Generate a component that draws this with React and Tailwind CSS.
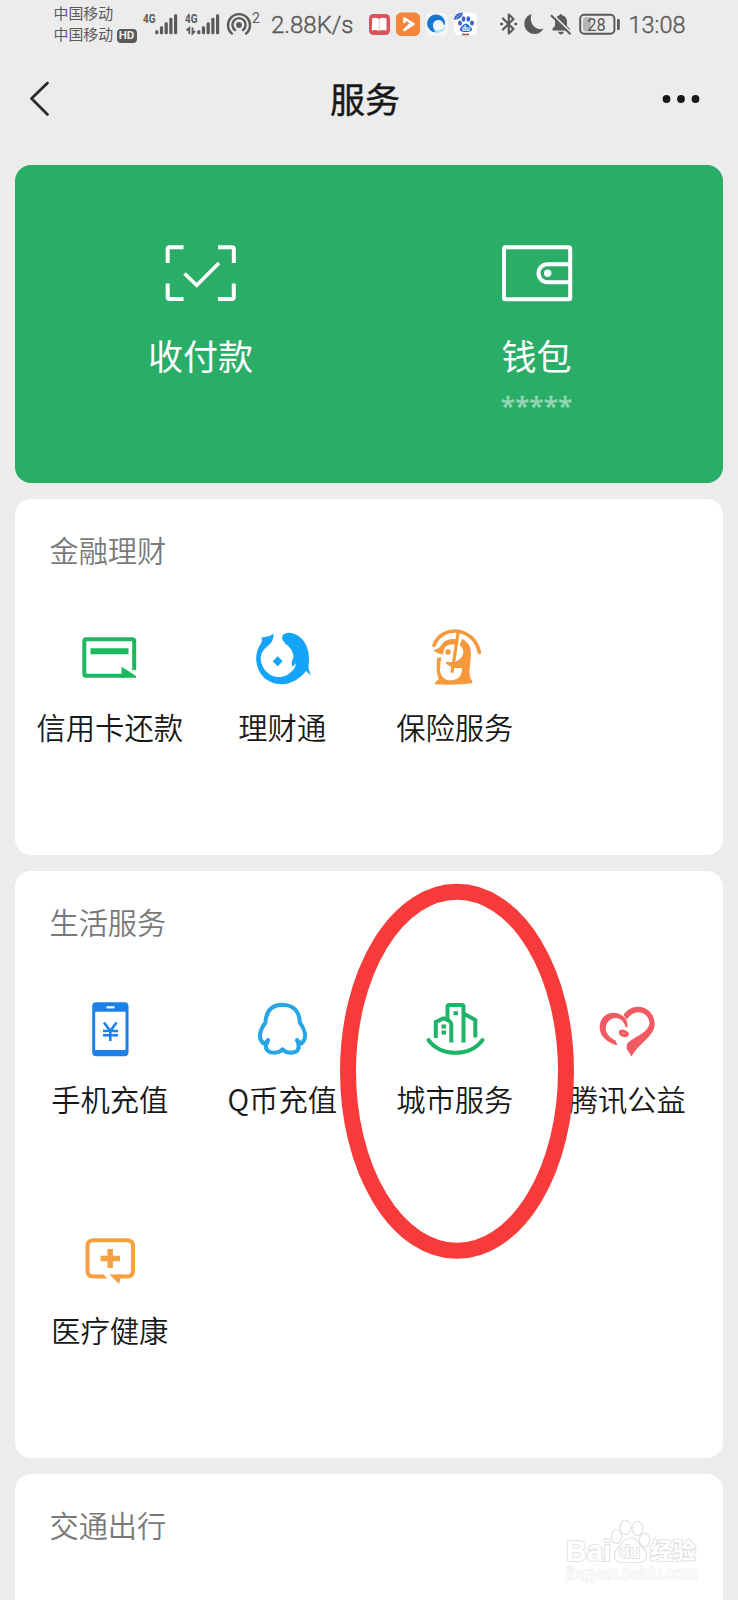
import React from "react";

function SignalBars({ x }) {
  return (
    <g fill="#5a5a5a">
      {[0, 1, 2, 3, 4].map((i) => {
        const h = [4, 8, 12, 16.5, 20][i];
        return <rect key={i} x={x + i * 4.7} y={34.3 - h} width="3.2" height={h} rx="1.4" />;
      })}
    </g>
  );
}

function StatusBar() {
  return (
    <div className="flex h-[50px] items-start pl-[53.5px] text-[#5a5a5a]">
      <div className="w-[61px] pt-[1.5px] text-[14.9px] leading-[21.5px] whitespace-nowrap">
        <div>中国移动</div>
        <div>中国移动</div>
      </div>
      <div className="mt-[28.5px] ml-[2px] flex h-[14px] w-[20px] items-center justify-center rounded-[4px] bg-[#5a5a5a] font-['Roboto',sans-serif] text-[11.5px] leading-none font-bold text-[#ececec]">
        HD
      </div>
      <svg className="ml-[5.5px] h-[50px] w-[37px] shrink-0" viewBox="142 0 37 50">
        <text x="143" y="23" fontSize="12.5" fontWeight="700" fill="#5a5a5a" fontFamily="Roboto, sans-serif" textLength="12.5" lengthAdjust="spacingAndGlyphs">4G</text>
        <SignalBars x={155.2} />
      </svg>
      <svg className="ml-[5px] h-[50px] w-[37px] shrink-0" viewBox="184 0 37 50">
        <text x="185" y="23" fontSize="12.5" fontWeight="700" fill="#5a5a5a" fontFamily="Roboto, sans-serif" textLength="12.5" lengthAdjust="spacingAndGlyphs">4G</text>
        <path d="M189.300 34V28L186.500 30.500M192.500 27.500V33.500L195 31" fill="none" stroke="#5a5a5a" strokeWidth="1.800" />
        <SignalBars x={197.2} />
      </svg>
      <svg className="ml-[4px] h-[50px] w-[28px] shrink-0" viewBox="225 0 28 50" fill="none" stroke="#5a5a5a" strokeWidth="2.4" strokeLinecap="round">
        <circle cx="239" cy="25" r="2.9" fill="#5a5a5a" stroke="none" />
        <path d="M232 33.6A11 11 0 1 1 246 33.6" />
        <path d="M235 30A6.6 6.6 0 1 1 243 30" />
      </svg>
      <div className="mt-[11px] -ml-px w-[18px] font-['Roboto',sans-serif] text-[14px] leading-[14px]">2</div>
      <div className="mt-[10.5px] ml-px w-[97px] font-['Roboto',sans-serif] text-[24px] leading-[29px] font-light whitespace-nowrap [-webkit-text-stroke:0.4px_#5a5a5a]">
        2.88K/s
      </div>
      <svg className="h-[50px] w-[112px] shrink-0" viewBox="368 0 112 50">
        <rect x="369" y="14" width="21" height="21" rx="4.5" fill="#d9525c" />
        <path d="M372 18.5q4-1.500 7 .5q3.500-2 7.500-.5V30.500q-4-1.200-7.500.3q-3-1.500-7-.3Z" fill="#fff" />
        <path d="M379.300 19.500V30" stroke="#eab0b4" strokeWidth=".8" />
        <rect x="396" y="12.500" width="24" height="23.500" rx="5.500" fill="#f58538" />
        <path d="M404.500 22V18.500L413.500 24L404.500 30L410 24.500" fill="none" stroke="#fff" strokeWidth="2.600" strokeLinejoin="round" strokeLinecap="round" />
        <rect x="426" y="13" width="22" height="22.500" rx="5" fill="#f4f7fa" />
        <path d="M430.500 30.500A9 9 0 1 1 445 22Q445.500 24 444 25.500Q443 19.500 437.500 20Q432.500 21 433 26.500Q433.500 29.500 436.500 32Q433 33 430.500 30.500Z" fill="#1577d2" />
        <path d="M433 27Q435 31 439 30.500Q443 29.500 445.500 26Q444 32 438 33Q434 32.500 433 27Z" fill="#a5dff7" />
        <rect x="454" y="12.500" width="23" height="23" rx="5.500" fill="#fff" />
        <g fill="#3a63cf">
          <ellipse cx="460" cy="23" rx="2" ry="2.600" />
          <ellipse cx="463.500" cy="19" rx="1.900" ry="2.700" />
          <ellipse cx="468.300" cy="19" rx="1.900" ry="2.700" />
          <ellipse cx="472" cy="23" rx="2" ry="2.600" />
          <path d="M466 23.500Q468 23.500 469.500 26Q472.500 28 472 30.200Q471 32 466 32Q460.500 32 459.700 30.200Q459.500 28 462 26Q464 23.500 466 23.500Z" />
          <path d="M454 20Q454 12.500 463 12.500Q462 19.500 454 20Z" />
        </g>
        <path d="M455.500 19L461 14" stroke="#c8d6f5" strokeWidth=".6" />
        <text x="462" y="31" fontSize="7" fontWeight="700" fill="#fff" fontFamily="Roboto, sans-serif">du</text>
        <path d="M462 34.500H469" stroke="#b94a4a" strokeWidth="1.600" />
      </svg>
      <svg className="ml-[18px] h-[50px] w-[124px] shrink-0" viewBox="498 0 124 50">
        <g fill="none" stroke="#5a5a5a" strokeWidth="2.200" strokeLinejoin="round" strokeLinecap="round">
          <path d="M503 18.500L513.500 29L508.800 33.500V14.500L513.500 19L503 29.500" />
          <path d="M501.300 24h.6M515.500 24h.6" strokeWidth="2.600" />
        </g>
        <path d="M531.500 14A10.200 10.200 0 1 0 543.500 28.500Q538.500 30.500 534 26.500Q529.300 21.500 531.500 14Z" fill="#5a5a5a" />
        <path d="M552.500 30.500V28.500L555 26V21Q555.500 16.500 559 15.500Q560.800 12.500 562.600 15.500Q566.500 16.500 567 21V26L570 29V30.500Z" fill="#5a5a5a" />
        <path d="M558 31.800H564Q563 34.500 561 34.500Q559 34.500 558 31.800Z" fill="#5a5a5a" />
        <path d="M552.500 14.500L572 33.500" stroke="#ececec" strokeWidth="1.800" />
        <path d="M551 15.200L570.500 34.200" stroke="#5a5a5a" strokeWidth="2" />
        <rect x="580.200" y="14.800" width="34.200" height="19" rx="4" fill="none" stroke="#5a5a5a" strokeWidth="2" />
        <path d="M585 17.300H591V31.300H585Q583 31.300 583 29V19.500Q583 17.300 585 17.300Z" fill="#b5b5b5" />
        <rect x="617" y="19" width="2.800" height="11" rx="1" fill="#5a5a5a" />
        <text x="587.300" y="31" fontSize="18.500" fill="#5a5a5a" fontFamily="Roboto, sans-serif" textLength="18.500" lengthAdjust="spacingAndGlyphs">28</text>
      </svg>
      <div className="mt-[10.5px] ml-[6.5px] font-['Roboto',sans-serif] text-[23.500px] leading-[29px] font-light whitespace-nowrap [-webkit-text-stroke:0.4px_#5a5a5a]">
        13:08
      </div>
    </div>
  );
}

function TitleBar() {
  return (
    <div className="flex h-[115px] items-start justify-between pr-[36px] pl-[28px]">
      <svg className="mt-[29px] h-[40px] w-[40px]" viewBox="28 79 40 40" fill="none" stroke="#2b2b2b" strokeWidth="2.800" strokeLinecap="round" strokeLinejoin="round">
        <path d="M47.500 83L31.500 98.500L47.500 114.500" />
      </svg>
      <h1 className="mt-[28px] text-[35px] leading-[40px] text-[#181818] [-webkit-text-stroke:0.4px_#181818]">服务</h1>
      <svg className="mt-[29px] h-[40px] w-[40px]" viewBox="662 79 40 40" fill="#181818">
        <circle cx="666.500" cy="99" r="3.900" />
        <circle cx="681" cy="99" r="3.900" />
        <circle cx="695.500" cy="99" r="3.900" />
      </svg>
    </div>
  );
}

const PayIcon = () => (
  <svg className="h-[60px] w-[76px]" viewBox="163 243 76 60" fill="none" stroke="#fff" strokeWidth="4">
    <path d="M183.500 247.200H169.500Q167.700 247.200 167.700 249V263M218 247.200H232Q233.800 247.200 233.800 249V263M183.500 299H169.500Q167.700 299 167.700 297.200V283.500M218 299H232Q233.800 299 233.800 297.200V283.500" />
    <path d="M184.500 273.500L196.700 285.200L219 263" strokeWidth="3.600" />
  </svg>
);

const WalletIcon = () => (
  <svg className="h-[60px] w-[76px]" viewBox="499 243 76 60" fill="none" stroke="#fff" strokeWidth="4">
    <rect x="504" y="247.200" width="66.200" height="52" rx="1.500" />
    <path d="M570 264.300H547.500A9 9 0 0 0 547.500 282.300H570" />
    <circle cx="547.700" cy="273.300" r="3.700" fill="#fff" stroke="none" />
  </svg>
);

const CreditIcon = () => (
  <svg className="size-[72px]" viewBox="73.5 622 72 72" fill="none" stroke="#1cb85f" strokeWidth="4">
    <path d="M133.700 670V641Q133.700 639.200 132 639.200H85.500Q83.800 639.200 83.800 641V674Q83.800 675.800 85.500 675.800H124" />
    <path d="M90 651.200H128" strokeWidth="6" />
    <path d="M121 666.800L135.500 676V677.800H121Z" fill="#1cb85f" stroke="none" />
  </svg>
);

const FishIcon = () => (
  <svg className="size-[72px]" viewBox="0 0 216 216" fill="#14a5fb">
    <path d="M83 35Q64 48 47 45Q50 56 44 66C24 92 26 138 52 165C86 198 144 194 180 147L194 160L187 136C196 92 180 34 126 32Q107 34 108 50Q112 60 127 72Q142 88 143 106Q134 118 139 136L149 124C150 140 134 152 122 160C84 178 44 148 44 106Q46 88 64 73Q84 58 83 35Z" />
    <path d="M95 103L110 118L95 133L80 118Z" />
  </svg>
);

const InsuranceIcon = () => (
  <svg className="size-[72px]" viewBox="0 0 216 216" fill="#f5993c">
    <path d="M45 70C68 6 166 14 181 91" fill="none" stroke="#f5993c" strokeWidth="11" strokeLinecap="round" />
    <path d="M43 84Q60 82 70 65Q84 48 114 52L110 69Q96 64 82 72Q74 78 74 88L72 97Q54 96 43 84Z" />
    <circle cx="87" cy="90" r="8" />
    <path d="M118 28L99 152" fill="none" stroke="#f5993c" strokeWidth="9.500" />
    <path d="M129 50Q157 64 156 96L151 150Q152 168 160 178V184Q110 190 46 187Q50 176 60 171C50 154 54 130 54 108L67 106Q63 128 63 146C68 170 82 177 102 174C124 171 129 154 129 138H105L92 132L81 125V120H96Q106 124 122 112Q134 100 133 88Q132 77 122 70Z" />
  </svg>
);

const PhoneIcon = () => (
  <svg className="size-[72px]" viewBox="73.5 994 72 72">
    <rect x="91.700" y="1002.300" width="36.300" height="54" rx="4" fill="#1b80e8" />
    <rect x="94.700" y="1011.700" width="30.300" height="38.300" fill="#fff" />
    <path d="M106 1007.300H114" stroke="#fff" strokeWidth="2.200" />
    <path d="M103.500 1022.500L109.800 1031L116 1022.500M109.800 1030.500V1041M102.500 1031H117.500M102.500 1035.300H117.500" fill="none" stroke="#1b80e8" strokeWidth="2.600" />
  </svg>
);

const QQIcon = () => (
  <svg className="size-[72px]" viewBox="246 994 72 72" fill="none" stroke="#27a5e4" strokeWidth="4" strokeLinejoin="round" strokeLinecap="round">
    <path d="M268 1040.500Q264.500 1043.500 263.500 1043.500C257 1038 260.500 1029 265.500 1022.500C266 1011 272 1005 282.500 1004.800C293 1005 299.500 1011 299.800 1022.500C304.500 1029 308 1038 301.500 1043.500Q300.500 1043.500 297.200 1040.500" />
    <path d="M266 1044.500C265 1050 269 1052.800 274.500 1052.800Q280 1052.500 282.500 1049.300Q285.500 1052.500 291 1052.800C296.500 1052.800 299.500 1050 298.500 1044.500" />
    <path d="M268 1040L267 1043M297.200 1040L298.200 1043" />
  </svg>
);

const CityIcon = () => (
  <svg className="size-[72px]" viewBox="418.5 994 72 72" fill="none" stroke="#1cb467" strokeWidth="4">
    <path d="M435.300 1038V1022L443 1018.300Q450.800 1020.500 450.800 1024.500V1042.500" />
    <path d="M447 1019V1006.500Q447 1005 448.500 1005H461.500Q463 1005 463 1006.500V1042.500" />
    <path d="M463 1013.500L474.800 1020V1037.500" />
    <path d="M428 1040C440 1057 470 1057 482 1040" strokeLinecap="round" />
    <path d="M441 1026.500H445.500M441 1032.500H445.500M453 1013.200H457.500" />
  </svg>
);

const HeartIcon = () => (
  <svg className="size-[72px]" viewBox="591 994 72 72" fill="#f15a60">
    <path d="M623.500 1014.500Q630 1006.500 638 1006.800C648 1007 655.500 1015 654.500 1026C653 1037 640 1042 631.500 1056.500L626.500 1048.500L627 1044C634 1036 648 1034 649.500 1023C649 1013.500 638 1009 631 1015Q628.500 1017.500 626.500 1019.500Z" />
    <path d="M627.300 1027.500C629 1017 618 1010.500 609 1013.500C599 1017 596.500 1030 604 1038Q609.500 1043.500 617.500 1045.500L615.500 1040.500Q608.500 1037.500 606 1031C604.500 1022.500 611 1017 617 1018Q624 1019.500 625.300 1027Z" />
    <path d="M619 1031Q622 1028.500 625.500 1030.500Q630 1032 628.500 1035.500Q626 1038.500 622 1036.500Q618.500 1035.500 619 1031Z" />
    <path d="M622 1033L625 1033.500" stroke="#f9a3a5" strokeWidth="1" />
  </svg>
);

const HealthIcon = () => (
  <svg className="size-[72px]" viewBox="73.5 1225 72 72" fill="none" stroke="#f5a042" strokeWidth="4">
    <path d="M102.500 1276.600H93Q87 1276.600 87 1270.600V1246Q87 1240.300 93 1240.300H126.500Q132.500 1240.300 132.500 1246V1270.600Q132.500 1276.600 126.500 1276.600H116" />
    <path d="M109.700 1249V1268M100 1258.500H119.500" strokeWidth="5.400" />
    <path d="M101 1274.600H103L107 1278.600H101ZM109 1274.600H121L118.500 1284Z" fill="#f5a042" stroke="none" />
  </svg>
);

function Service({ icon: Icon, label }) {
  return (
    <div className="flex h-[231px] flex-col items-center">
      <Icon />
      <span className="mt-[12px] text-[29.3px] leading-[40px] font-[350] whitespace-nowrap text-[#181818]">{label}</span>
    </div>
  );
}

function Section({ title, items, className, children }) {
  return (
    <section className={"relative shrink-0 rounded-[16px] bg-white pt-[29.5px] pl-[8.5px] " + className}>
      <h2 className="pl-[26px] text-[29.2px] leading-[40px] font-[350] text-[#797979]">{title}</h2>
      <div className="mt-[53.5px] grid grid-cols-[repeat(4,172.5px)]">
        {items.map((item) => (
          <Service key={item.label} {...item} />
        ))}
      </div>
      {children}
    </section>
  );
}

function Watermark() {
  return (
    <div className="absolute top-[40px] left-[547px] w-[140px] font-['Liberation_Sans','Noto_Sans_CJK_SC',sans-serif] text-white">
      <svg className="h-[74px] w-[140px]" viewBox="562 1514 140 74" fill="#fff" stroke="#e2e2e2" strokeWidth="1.200">
        <g style={{ paintOrder: "stroke" }} strokeWidth="2">
          <text x="566" y="1561" fontSize="29" fontWeight="700" textLength="45" lengthAdjust="spacingAndGlyphs">Bai</text>
          <text x="650" y="1559" fontSize="23" fontWeight="700" textLength="46">经验</text>
        </g>
        <path d="M630 1538C637 1537 638 1544 643 1548C649 1553 648 1562 639 1562.500H622C613 1562 612 1553 618 1548C622 1545 623 1538 630 1538Z" />
        <ellipse cx="616.500" cy="1536.500" rx="5.200" ry="7" />
        <ellipse cx="625.500" cy="1527.500" rx="5.400" ry="7.200" />
        <ellipse cx="637.500" cy="1528.500" rx="5.400" ry="7.200" />
        <ellipse cx="644.500" cy="1540" rx="5.200" ry="7" />
        <text x="619" y="1558" fontSize="19" textLength="21" style={{ paintOrder: "stroke" }} strokeWidth="2">du</text>
        <text x="566" y="1579" fontSize="17" textLength="131" lengthAdjust="spacingAndGlyphs" style={{ paintOrder: "stroke" }} strokeWidth="1.500" stroke="#ededed">jingyan.baidu.com</text>
      </svg>
    </div>
  );
}

const finance = [
  { icon: CreditIcon, label: "信用卡还款" },
  { icon: FishIcon, label: "理财通" },
  { icon: InsuranceIcon, label: "保险服务" },
];

const life = [
  { icon: PhoneIcon, label: "手机充值" },
  { icon: QQIcon, label: "Q币充值" },
  { icon: CityIcon, label: "城市服务" },
  { icon: HeartIcon, label: "腾讯公益" },
  { icon: HealthIcon, label: "医疗健康" },
];

export default function App() {
  return (
    <div className="h-[1600px] w-[738px] overflow-hidden bg-[#ececec] font-['Noto_Sans_CJK_SC',sans-serif]">
      <StatusBar />
      <TitleBar />
      <main className="flex flex-col gap-[16px] pr-[15.5px] pl-[15px]">
        <section className="grid h-[318px] shrink-0 grid-cols-[336px_336px] rounded-[16px] bg-[#2aae67] pt-[78px] pl-[17.5px]">
          <div className="flex flex-col items-center">
            <PayIcon />
            <span className="mt-[32px] text-[35px] leading-[40px] text-white">收付款</span>
          </div>
          <div className="flex flex-col items-center">
            <WalletIcon />
            <span className="mt-[32px] text-[35px] leading-[40px] text-white">钱包</span>
            <span className="mt-[12px] font-['Noto_Sans',sans-serif] text-[26px] leading-[36px] text-[#94d6b3] [-webkit-text-stroke:0.5px_#94d6b3]">*****</span>
          </div>
        </section>
        <Section title="金融理财" items={finance} className="h-[356px]" />
        <Section title="生活服务" items={life} className="h-[587px]">
          <svg className="absolute top-[8px] left-[320px] z-10 h-[384px] w-[244px]" viewBox="335 879 244 384" fill="none">
            <ellipse cx="457" cy="1071.300" rx="109" ry="179.500" stroke="#f73b3b" strokeWidth="16" />
          </svg>
        </Section>
        <Section title="交通出行" items={[]} className="h-[200px]">
          <Watermark />
        </Section>
      </main>
    </div>
  );
}
